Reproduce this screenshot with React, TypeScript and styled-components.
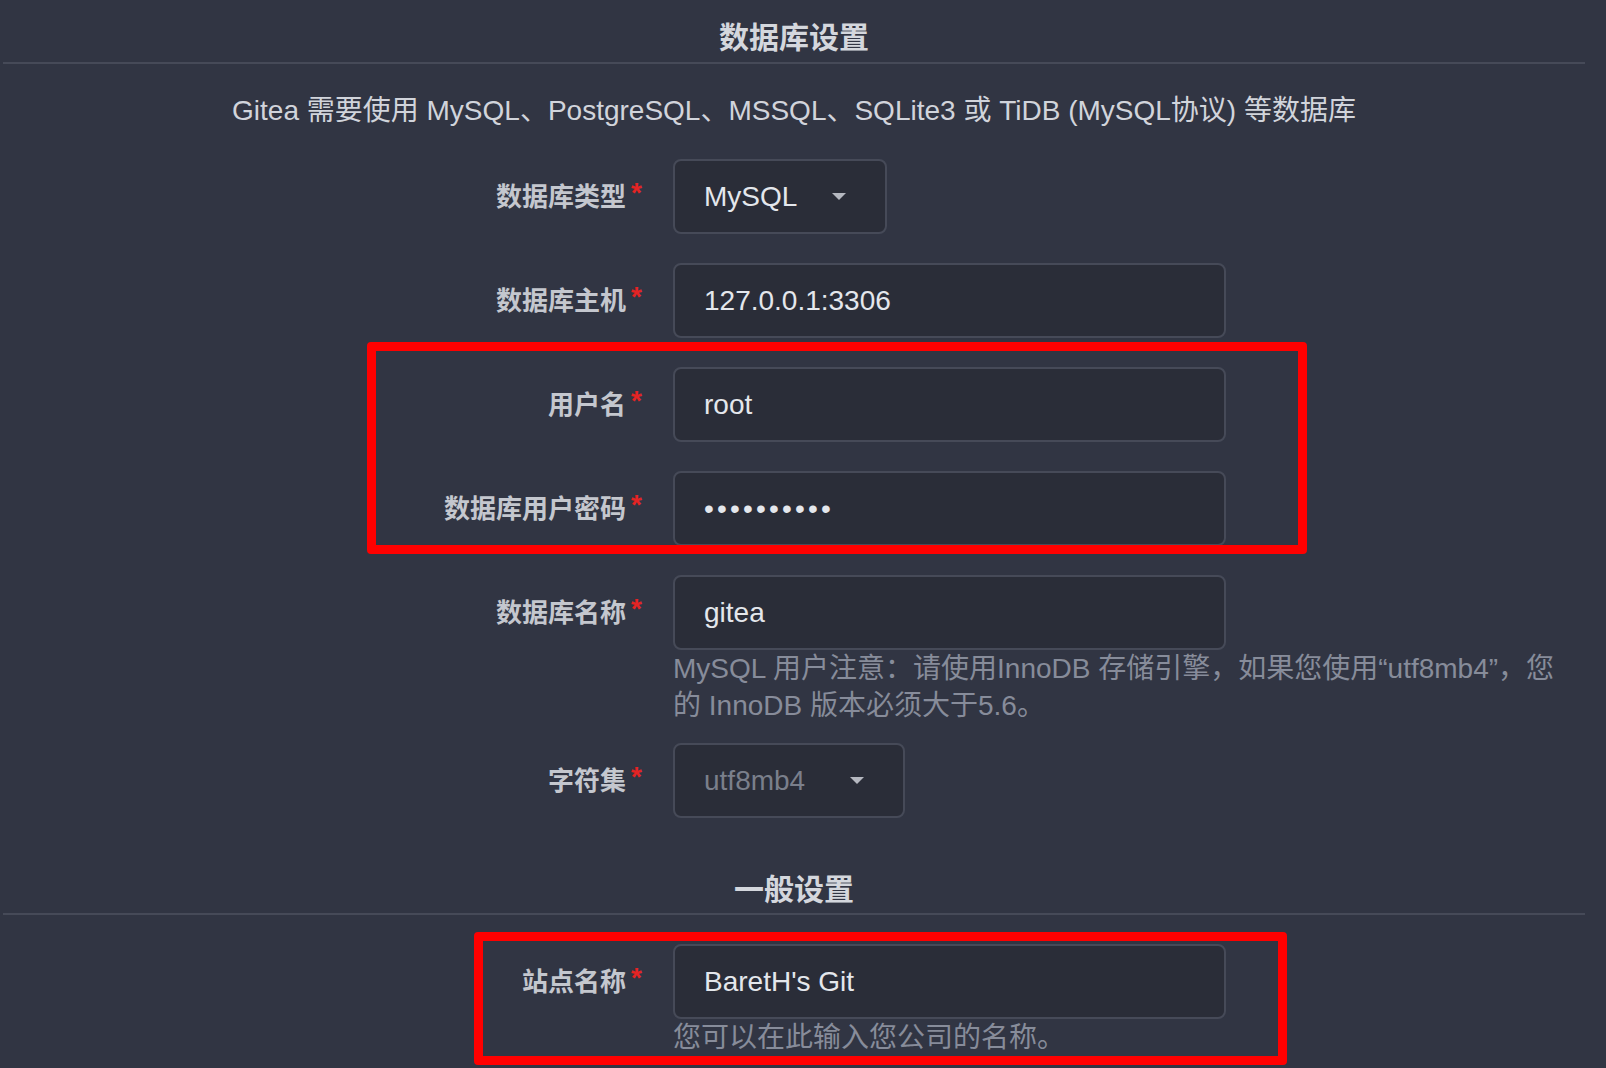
import React from "react";
import styled, { createGlobalStyle } from "styled-components";

const GlobalStyle = createGlobalStyle`
  html, body {
    margin: 0;
    padding: 0;
    background: #313543;
  }
  body {
    font-family: "Liberation Sans", "Noto Sans CJK SC", sans-serif;
    -webkit-font-smoothing: antialiased;
  }
`;

const Page = styled.main`
  width: 1582px;
  height: 1068px;
  padding: 0 21px 0 3px;
  overflow: hidden;
`;

const SectionTitle = styled.h4<{ $top: number; $pad: number }>`
  margin: ${(p) => p.$top}px 0 0;
  padding-bottom: ${(p) => p.$pad}px;
  border-bottom: 2px solid #464a58;
  font: 700 30px/40px "Noto Sans CJK SC", sans-serif;
  color: #d4d7dd;
  text-align: center;
`;

const Intro = styled.p`
  margin: 27px 0 28px;
  font: 400 28px/40px "Liberation Sans", "Noto Sans CJK SC", sans-serif;
  color: #d1d4db;
  text-align: center;
`;

const Field = styled.div<{ $after?: number }>`
  display: grid;
  grid-template-columns: 639px 1fr;
  column-gap: 31px;
  align-items: start;
  margin-bottom: ${(p) => p.$after ?? 29}px;
`;

const Label = styled.label`
  box-sizing: border-box;
  height: 75px;
  padding-bottom: 4px;
  display: flex;
  align-items: center;
  justify-content: flex-end;
  font: 700 26px/1 "Noto Sans CJK SC", sans-serif;
  color: #c4c7ce;

  &::after {
    content: "*";
    align-self: flex-start;
    margin: 20px 0 0 5px;
    font: 700 28px/28px "Liberation Sans", sans-serif;
    color: #e42424;
  }
`;

const Control = styled.div`
  display: flex;
  flex-direction: column;
  align-items: flex-start;
`;

const TextInput = styled.input<{ $secret?: boolean }>`
  box-sizing: border-box;
  width: 553px;
  height: 75px;
  padding: 0 27px 0 29px;
  background: #2a2d38;
  border: 2px solid #464a58;
  border-radius: 8px;
  outline: none;
  font: 400 28px "Liberation Sans", sans-serif;
  letter-spacing: ${(p) => (p.$secret ? "3.2px" : "0")};
  color: #e4e7ec;
`;

const Dropdown = styled.div<{ $width: number; $disabled?: boolean }>`
  box-sizing: border-box;
  width: ${(p) => p.$width}px;
  height: 75px;
  display: flex;
  align-items: center;
  justify-content: space-between;
  padding: 0 39px 0 29px;
  background: #2a2d38;
  border: 2px solid #464a58;
  border-radius: 8px;
  font: 400 28px "Liberation Sans", sans-serif;
  color: ${(p) => (p.$disabled ? "#7a7f8b" : "#e4e7ec")};
`;

const Caret = styled.svg`
  width: 14px;
  height: 7px;
  flex: none;
`;

const Help = styled.div`
  font: 400 28px/37px "Liberation Sans", "Noto Sans CJK SC", sans-serif;
  color: #878c9a;
  white-space: nowrap;
`;

const Highlight = styled.div<{
  $top: number;
  $right: number;
  $bottom: number;
  $left: number;
  $before?: number;
  $after?: number;
}>`
  position: relative;
  margin-top: ${(p) => p.$before ?? 0}px;
  margin-bottom: ${(p) => p.$after ?? 0}px;

  &::before {
    content: "";
    position: absolute;
    top: ${(p) => p.$top}px;
    right: ${(p) => p.$right}px;
    bottom: ${(p) => p.$bottom}px;
    left: ${(p) => p.$left}px;
    border: 9px solid #ff0000;
    border-radius: 4px;
    pointer-events: none;
    z-index: 2;
  }
`;

const DownCaret = () => (
  <Caret viewBox="0 0 14 7" aria-hidden="true">
    <path d="M0 0 L14 0 L7 7 Z" fill="#b5b8c0" />
  </Caret>
);

export default function App() {
  return (
    <>
      <GlobalStyle />
      <Page>
        <SectionTitle $top={15} $pad={7}>
          数据库设置
        </SectionTitle>
        <Intro>
          Gitea 需要使用 MySQL、PostgreSQL、MSSQL、SQLite3 或 TiDB (MySQL协议) 等数据库
        </Intro>

        <Field>
          <Label>数据库类型</Label>
          <Control>
            <Dropdown $width={214}>
              <span>MySQL</span>
              <DownCaret />
            </Dropdown>
          </Control>
        </Field>

        <Field>
          <Label>数据库主机</Label>
          <Control>
            <TextInput value="127.0.0.1:3306" readOnly />
          </Control>
        </Field>

        <Highlight $top={-25} $right={278} $bottom={-8} $left={364} $after={29}>
          <Field>
            <Label>用户名</Label>
            <Control>
              <TextInput value="root" readOnly />
            </Control>
          </Field>
          <Field $after={0}>
            <Label>数据库用户密码</Label>
            <Control>
              <TextInput type="password" value="1234567890" readOnly $secret />
            </Control>
          </Field>
        </Highlight>

        <Field $after={19}>
          <Label>数据库名称</Label>
          <Control>
            <TextInput value="gitea" readOnly />
            <Help>
              MySQL 用户注意：请使用InnoDB 存储引擎，如果您使用“utf8mb4”，您
              <br />
              的 InnoDB 版本必须大于5.6。
            </Help>
          </Control>
        </Field>

        <Field $after={0}>
          <Label>字符集</Label>
          <Control>
            <Dropdown $width={232} $disabled>
              <span>utf8mb4</span>
              <DownCaret />
            </Dropdown>
          </Control>
        </Field>

        <SectionTitle $top={49} $pad={6}>
          一般设置
        </SectionTitle>

        <Highlight $top={-12} $right={298} $bottom={-9} $left={471} $before={29}>
          <Field $after={0}>
            <Label>站点名称</Label>
            <Control>
              <TextInput value="BaretH's Git" readOnly />
              <Help>您可以在此输入您公司的名称。</Help>
            </Control>
          </Field>
        </Highlight>
      </Page>
    </>
  );
}
